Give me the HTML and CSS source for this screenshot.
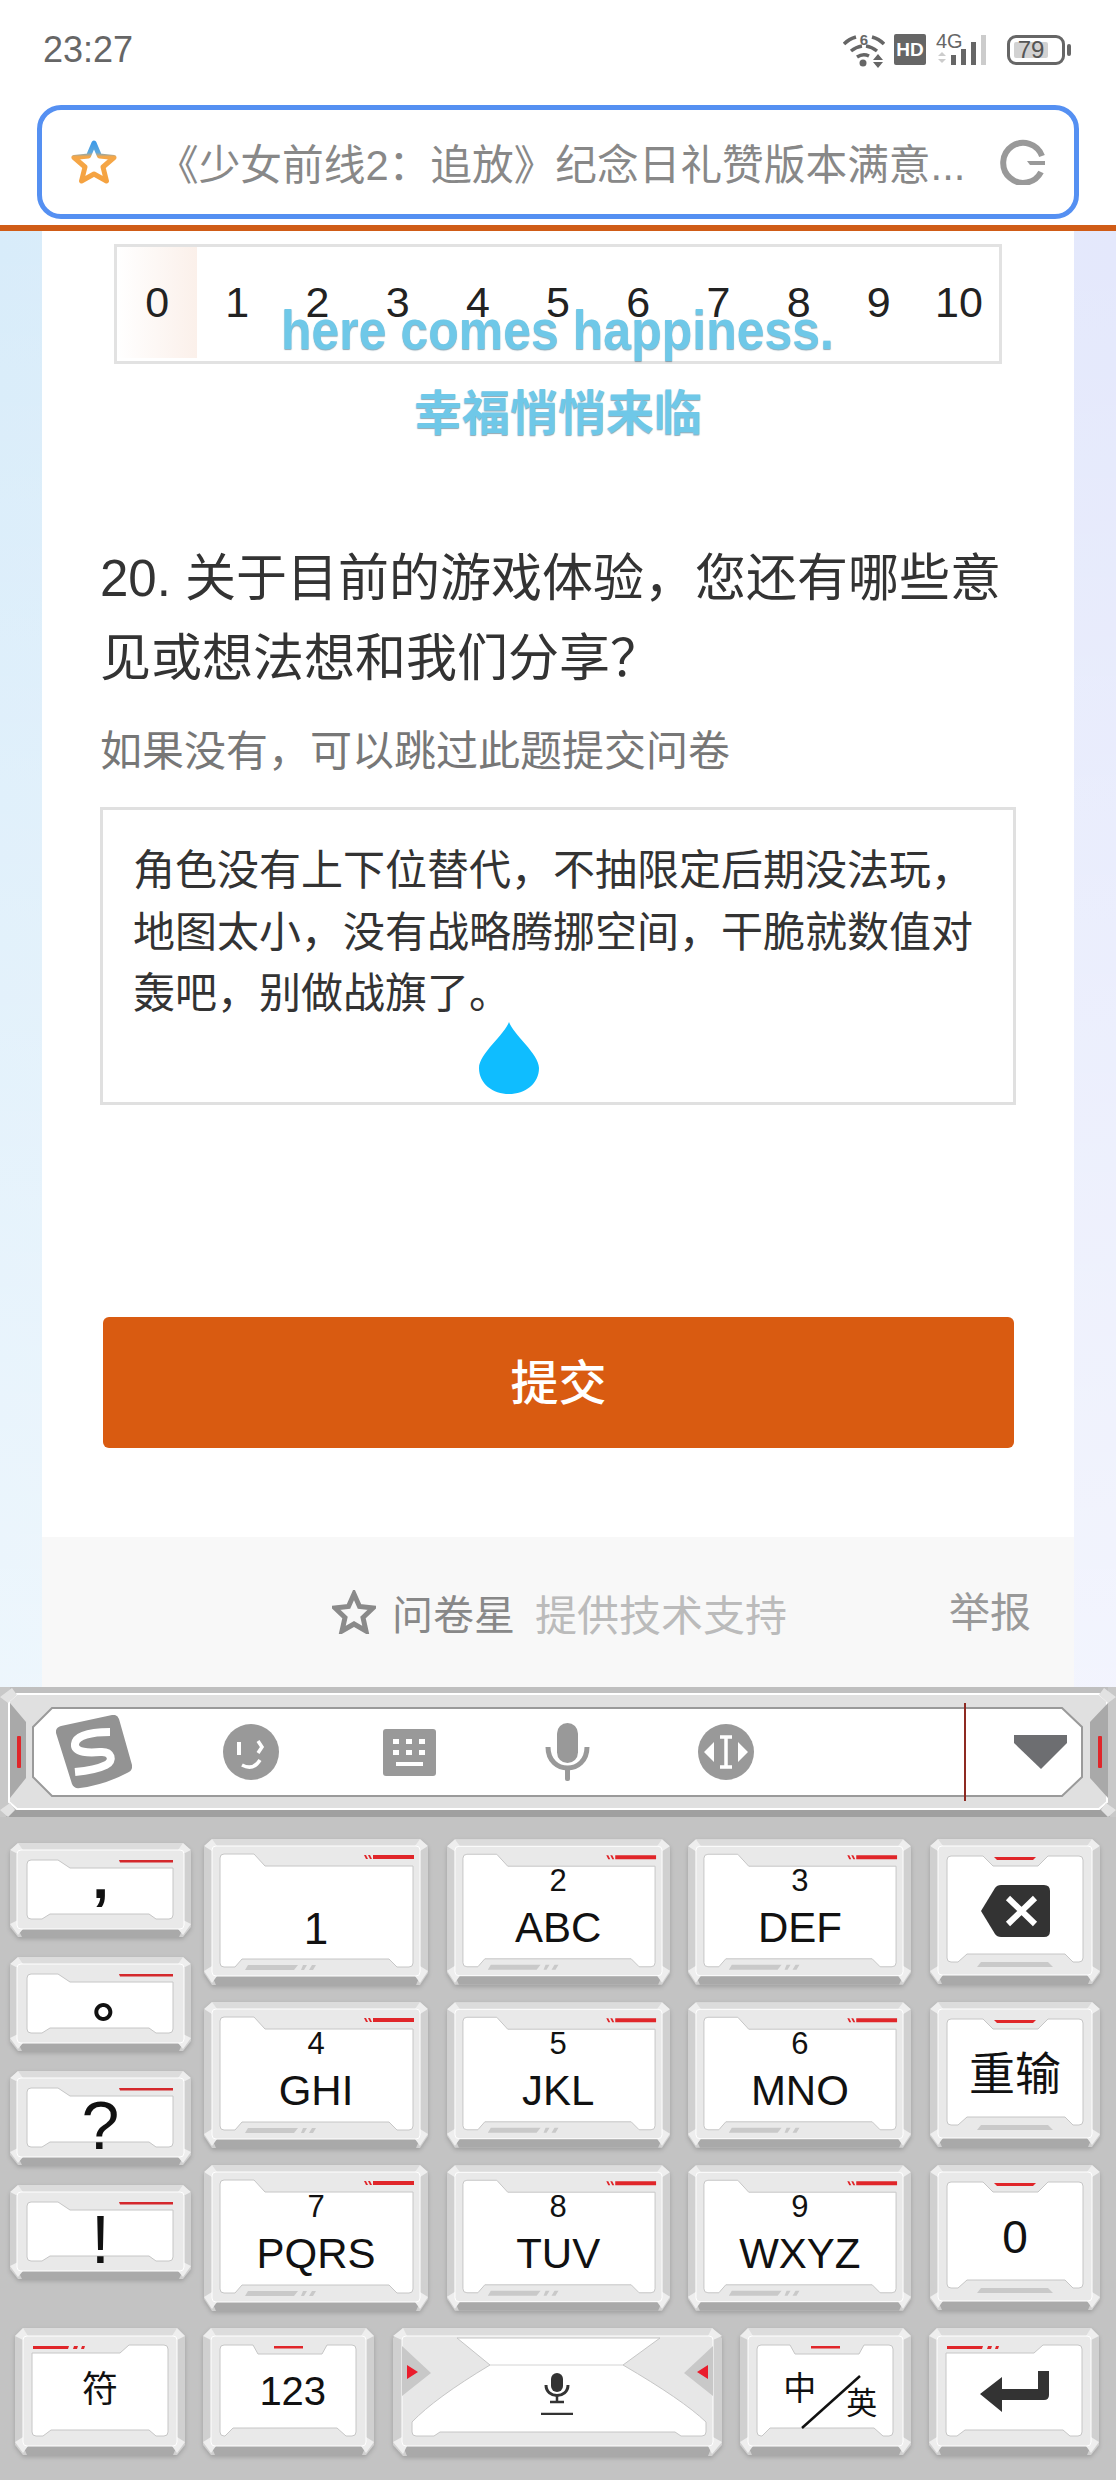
FILE: index.html
```html
<!DOCTYPE html>
<html lang="zh-CN">

<head>
    <meta charset="UTF-8">
    <meta name="viewport" content="width=device-width, initial-scale=1.0">
    <link rel="stylesheet" href="styles.css">
    <title>问卷</title>
</head>

<body>
    <!-- key frames, one for each key size -->
    <svg class="defs" width="0" height="0">
        <defs>
            <linearGradient id="star-edge" x1="0" y1="0" x2="0" y2="1">
                <stop offset="0" stop-color="#3f9be8" />
                <stop offset="0.25" stop-color="#5fa8dc" />
                <stop offset="0.36" stop-color="#f5a748" />
                <stop offset="1" stop-color="#f5a240" />
            </linearGradient>
        </defs>
        <symbol id="key-num" viewBox="0 0 224 146">
            <path d="M8 0H216L224 8V134L216 146H8L0 134V8Z" fill="#d0d0d0" />
            <path d="M8 0H216L216 8H8Z" fill="#dcdcdc" />
            <path d="M8 137H216L212 146H12Z" fill="#a9a9a9" />
            <path d="M8 0L13 7L8 12L0 7ZM216 0L224 7L216 12L211 7ZM0 132L8 127L13 137L8 144ZM224 132L216 127L211 137L216 144Z" fill="#eeeeee" />
            <rect x="8" y="7" width="208" height="130" rx="4" fill="#e9e9e9" stroke="#fff" />
            <path d="M16 19Q16 15 20 15H50L61 27H209V124Q209 128 205 128H193L185 120H38L31 128H20Q16 128 16 124Z" fill="#fff" stroke="#c6c6c6" />
            <path d="M169 16H210V20H169ZM160 16H162L164 20H162ZM164 16H166L168 20H166Z" fill="#e0262a" />
            <path d="M44 126H94L90 131H41ZM99 126H103L100 131H97ZM108 126H112L109 131H105Z" fill="#c9c9c9" />
        </symbol>
        <symbol id="key-side" viewBox="0 0 181 94">
            <path d="M8 0H173L181 8V84L173 94H8L0 84V8Z" fill="#d0d0d0" />
            <path d="M8 0H173L173 7H8Z" fill="#dcdcdc" />
            <path d="M8 86H173L169 94H12Z" fill="#a9a9a9" />
            <path d="M8 0L13 7L8 11L0 7ZM173 0L181 7L173 11L168 7ZM0 81L8 77L13 86L8 92ZM181 81L173 77L168 86L173 92Z" fill="#eeeeee" />
            <rect x="7" y="7" width="167" height="79" rx="4" fill="#e9e9e9" stroke="#fff" />
            <path d="M17 21Q17 17 21 17H48L60 25H163V72Q163 76 159 76H146L139 71H40L32 76H21Q17 76 17 72Z" fill="#fff" stroke="#c6c6c6" />
            <path d="M109 17H163V19.500H110Z" fill="#d4282c" />
        </symbol>
        <symbol id="key-action" viewBox="0 0 170 146">
            <path d="M8 0H162L170 8V134L162 145H8L0 134V8Z" fill="#d0d0d0" />
            <path d="M8 0H162L162 7H8Z" fill="#dcdcdc" />
            <path d="M8 136H162L158 145H12Z" fill="#a9a9a9" />
            <path d="M8 0L13 7L8 12L0 7ZM162 0L170 7L162 12L157 7ZM0 132L8 127L13 136L8 143ZM170 132L162 127L157 136L162 143Z" fill="#eeeeee" />
            <rect x="8" y="7" width="154" height="129" rx="4" fill="#e9e9e9" stroke="#fff" />
            <path d="M17 21Q17 17 21 17H53L63 27H108L118 17H149Q153 17 153 21V119Q153 123 149 123H143L135 115H37L28 123H21Q17 123 17 119Z" fill="#fff" stroke="#c6c6c6" />
            <path d="M64 18H106L103 21H67Z" fill="#e0262a" />
            <path d="M51 123H118L123 128H47Z" fill="#c9c9c9" />
        </symbol>
        <symbol id="key-corner" viewBox="0 0 170 127">
            <path d="M8 0H162L170 8V117L162 127H8L0 117V8Z" fill="#d0d0d0" />
            <path d="M8 0H162L162 8H8Z" fill="#dcdcdc" />
            <path d="M8 118H162L158 127H12Z" fill="#a9a9a9" />
            <path d="M8 0L13 8L8 12L0 8ZM162 0L170 8L162 12L157 8ZM0 114L8 109L13 118L8 125ZM170 114L162 109L157 118L162 125Z" fill="#eeeeee" />
            <rect x="8" y="8" width="154" height="110" rx="4" fill="#e9e9e9" stroke="#fff" />
            <path d="M17 25H105L114 17H149Q153 17 153 21V104Q153 108 149 108H141L134 102H36L28 108H21Q17 108 17 104Z" fill="#fff" stroke="#c6c6c6" />
            <path d="M18 18H54L53 21H18ZM59 18H63L62 21H58ZM67 18H70L69 21H66Z" fill="#e0262a" />
        </symbol>
        <symbol id="key-notch" viewBox="0 0 171 127">
            <path d="M8 0H163L171 8V117L163 127H8L0 117V8Z" fill="#d0d0d0" />
            <path d="M8 0H163L163 8H8Z" fill="#dcdcdc" />
            <path d="M8 118H163L159 127H12Z" fill="#a9a9a9" />
            <path d="M8 0L13 8L8 12L0 8ZM163 0L171 8L163 12L158 8ZM0 114L8 109L13 118L8 125ZM171 114L163 109L158 118L163 125Z" fill="#eeeeee" />
            <rect x="8" y="8" width="155" height="110" rx="4" fill="#e9e9e9" stroke="#fff" />
            <path d="M17 21Q17 17 21 17H50L55 26H119L124 17H149Q153 17 153 21V104Q153 108 149 108H143L134 100H30L22 108H21Q17 108 17 104Z" fill="#fff" stroke="#c6c6c6" />
            <path d="M71 18H100V20.500H71Z" fill="#e0262a" />
        </symbol>
        <symbol id="key-space" viewBox="0 0 329 128">
            <path d="M10 0H319L329 10V117L319 128H10L0 117V10Z" fill="#d0d0d0" />
            <path d="M10 0H319L319 8H10Z" fill="#dcdcdc" />
            <path d="M10 118H319L315 128H14Z" fill="#a9a9a9" />
            <path d="M10 0L14 8L9 12L0 8ZM319 0L329 8L320 12L315 8ZM0 114L9 109L14 118L10 126ZM329 114L320 109L315 118L319 126Z" fill="#eeeeee" />
            <rect x="9" y="8" width="311" height="110" rx="4" fill="#e7e7e7" stroke="#fff" />
            <path d="M64 10H267L230 37Q290 72 313 94V104Q313 108 309 108H288L282 104H47L41 108H23Q19 108 19 104V94Q42 70 97 37Z" fill="#fff" stroke="#c6c6c6" />
            <path d="M97 37H230" stroke="#d4d4d4" fill="none" />
            <path d="M9 18L38 45L9 68ZM320 18L291 45L320 68Z" fill="#c8c8c8" />
            <path d="M14 37L25 44L14 51ZM315 37L304 44L315 51Z" fill="#ea1c2c" />
        </symbol>
    </svg>

    <header class="top">
        <div class="status">
            <span class="time">23:27</span>
            <div class="status-icons">
                <svg class="i-wifi" viewBox="0 0 42 36" width="42" height="36">
                    <g fill="none" stroke="#666" stroke-width="3.500">
                        <path d="M1 12Q6 7 13 5" />
                        <path d="M29 5Q36 7 41 12" />
                        <path d="M8 19Q13 15 19 14" />
                        <path d="M23 14Q29 15 34 19" />
                        <path d="M14 25Q20 21 26 24" />
                    </g>
                    <circle cx="20" cy="31" r="3.500" fill="#666" />
                    <text x="21" y="13" class="wifi-six">6</text>
                    <path d="M35 22L40 28H30ZM30 30H40L35 36Z" fill="#666" />
                </svg>
                <span class="hd">HD</span>
                <svg class="i-signal" viewBox="0 0 60 38" width="60" height="38">
                    <text x="0" y="17" class="net">4G</text>
                    <path d="M6 21L10 25H2ZM2 28H10L6 32Z" fill="#ccc" />
                    <rect x="15" y="24" width="5" height="10" fill="#666" />
                    <rect x="25" y="18" width="5" height="16" fill="#666" />
                    <rect x="35" y="11" width="5" height="23" fill="#666" />
                    <rect x="45" y="4" width="5" height="30" fill="#ccc" />
                </svg>
                <div class="battery">
                    <span class="battery-level">79</span>
                </div>
                <span class="battery-nub"></span>
            </div>
        </div>
        <div class="address">
            <svg class="i-star" viewBox="0 0 46 46" width="46" height="46">
                <path d="M23 4L28.500 17L43 18.500L32 28L35.500 42L23 35L10.500 42L14 28L3 18.500L17.500 17Z" fill="#fff" stroke="url(#star-edge)" stroke-width="5" stroke-linejoin="round" />
            </svg>
            <span class="address-text">《少女前线2&#xFF1A;追放》纪念日礼赞版本满意...</span>
            <svg class="i-reload" viewBox="0 0 46 46" width="46" height="46">
                <path d="M41 33A20 20 0 1 1 42 17" fill="none" stroke="#999" stroke-width="6" />
                <path d="M27 22H45V26H30Z" fill="#999" />
            </svg>
        </div>
    </header>

    <main class="card">
        <div class="scale">
            <span class="scale-cell first">0</span>
            <span class="scale-cell">1</span>
            <span class="scale-cell">2</span>
            <span class="scale-cell">3</span>
            <span class="scale-cell">4</span>
            <span class="scale-cell">5</span>
            <span class="scale-cell">6</span>
            <span class="scale-cell">7</span>
            <span class="scale-cell">8</span>
            <span class="scale-cell">9</span>
            <span class="scale-cell">10</span>
        </div>
        <div class="lyric">
            <div class="lyric-en">here comes happiness.</div>
            <div class="lyric-zh">幸福悄悄来临</div>
        </div>

        <h2 class="question">20. 关于目前的游戏体验&#xFF0C;您还有哪些意见或想法想和我们分享&#xFF1F;</h2>
        <p class="hint">如果没有&#xFF0C;可以跳过此题提交问卷</p>
        <div class="answer">
            角色没有上下位替代&#xFF0C;不抽限定后期没法玩&#xFF0C;地图太小&#xFF0C;没有战略腾挪空间&#xFF0C;干脆就数值对轰吧&#xFF0C;别做战旗了。
            <svg class="drop" viewBox="0 0 60 72" width="60" height="72">
                <path d="M30 0C34 12 60 32 60 46C60 62 46 72 30 72C14 72 0 62 0 46C0 32 26 12 30 0Z" fill="#0fbdff" />
            </svg>
        </div>
        <button class="submit">提交</button>
    </main>

    <footer class="credit">
        <svg class="i-credit" viewBox="0 0 44 44" width="44" height="44">
            <path d="M22 4L27.500 16.500L41 18L31 27.500L34 41L22 34L10 41L13 27.500L3 18L16.500 16.500Z" fill="none" stroke="#8a8a8a" stroke-width="5" stroke-linejoin="miter" />
        </svg>
        <span class="brand">问卷星</span>
        <span class="support">提供技术支持</span>
        <span class="report">举报</span>
    </footer>

    <section class="keyboard">
        <div class="toolbar">
            <svg class="toolbar-frame" viewBox="0 0 1116 137" width="1116" height="137">
                <rect x="0" y="0" width="1116" height="130" fill="#bfbfbf" />
                <rect x="0" y="0" width="10" height="130" fill="#c8c8c8" />
                <rect x="1108" y="0" width="8" height="130" fill="#c8c8c8" />
                <path d="M17 7H1099L1107 14V115L1099 122H17L9 115V14Z" fill="#e0e0e0" stroke="#fff" stroke-width="2" />
                <path d="M14 123H1102L1110 130H6Z" fill="#a0a0a0" />
                <path d="M10 16L26 35V91L10 111ZM1108 16L1090 35V91L1108 111Z" fill="#a9a9a9" />
                <path d="M0 10L12 1L17 8L8 16ZM1116 10L1104 1L1099 8L1108 16ZM0 123L10 116L15 123L8 130ZM1116 123L1106 116L1101 123L1108 130Z" fill="#e2e2e2" />
                <path d="M33 40L52 21H1062L1082 40V90L1062 109H52L33 90Z" fill="#fff" stroke="#9a9a9a" stroke-width="2" />
                <rect x="17" y="49" width="4" height="32" rx="1" fill="#e0262a" />
                <rect x="1098" y="49" width="4" height="32" rx="1" fill="#e0262a" />
            </svg>
            <svg class="tool tool-logo" viewBox="0 0 76 74" width="76" height="74">
                <path d="M5 11L56 0Q61 -1 63 4L76 50Q77 56 71 58Q48 70 24 73Q18 74 16 69L0 18Q-1 13 5 11Z" fill="#939393" />
                <path d="M54 17C36 17 20 20 19 29C18 38 34 38 44 37C56 36 58 46 50 50C42 54 30 56 19 57" fill="none" stroke="#fff" stroke-width="8" />
            </svg>
            <svg class="tool tool-face" viewBox="0 0 56 56" width="56" height="56">
                <circle cx="28" cy="28" r="28" fill="#999" />
                <path d="M16 18V31" fill="none" stroke="#fff" stroke-width="4" />
                <path d="M35 17L39 23L35 29" fill="none" stroke="#fff" stroke-width="3.500" />
                <path d="M19 41Q30 47 37 36" fill="none" stroke="#fff" stroke-width="3.500" />
            </svg>
            <svg class="tool tool-keys" viewBox="0 0 53 47" width="53" height="47">
                <rect width="53" height="47" rx="3" fill="#999" />
                <path d="M10 10H16V15H10ZM23 10H29V15H23ZM36 10H42V15H36ZM10 21H16V26H10ZM23 21H29V26H23ZM36 21H42V26H36ZM13 33H40V37H13Z" fill="#fff" />
            </svg>
            <svg class="tool tool-mic" viewBox="0 0 45 58" width="45" height="58">
                <rect x="12" y="0" width="21" height="40" rx="10.500" fill="#999" />
                <path d="M3 24C3 52 42 52 42 24" fill="none" stroke="#999" stroke-width="5" />
                <rect x="20" y="44" width="5" height="14" rx="2" fill="#999" />
            </svg>
            <svg class="tool tool-cursor" viewBox="0 0 56 56" width="56" height="56">
                <circle cx="28" cy="28" r="28" fill="#999" />
                <path d="M22 13H34M28 13V43M22 43H34" fill="none" stroke="#fff" stroke-width="3.500" />
                <path d="M16 18V38L6 28ZM40 18V38L50 28Z" fill="#fff" />
            </svg>
            <span class="tool-divider"></span>
            <svg class="tool tool-fold" viewBox="0 0 53 34" width="53" height="34">
                <path d="M0 0H53V8L27 34L0 8Z" fill="#6d6e71" />
            </svg>
        </div>

        <div class="keys-main">
            <div class="keys-side">
                <div class="key key-side">
                    <svg class="key-face"><use href="#key-side" /></svg>
                    <span class="glyph comma">,</span>
                </div>
                <div class="key key-side">
                    <svg class="key-face"><use href="#key-side" /></svg>
                    <span class="glyph stop">。</span>
                </div>
                <div class="key key-side">
                    <svg class="key-face"><use href="#key-side" /></svg>
                    <span class="glyph mark">?</span>
                </div>
                <div class="key key-side">
                    <svg class="key-face"><use href="#key-side" /></svg>
                    <span class="glyph mark">!</span>
                </div>
            </div>
            <div class="keys-grid">
                <div class="key key-num key-one">
                    <svg class="key-face"><use href="#key-num" /></svg>
                    <span class="big">1</span>
                </div>
                <div class="key key-num">
                    <svg class="key-face"><use href="#key-num" /></svg>
                    <span class="digit">2</span><span class="letters">ABC</span>
                </div>
                <div class="key key-num">
                    <svg class="key-face"><use href="#key-num" /></svg>
                    <span class="digit">3</span><span class="letters">DEF</span>
                </div>
                <div class="key key-action">
                    <svg class="key-face"><use href="#key-action" /></svg>
                    <svg class="key-icon" viewBox="0 0 69 52" width="69" height="52">
                        <path d="M14 3Q16 0 20 0H63Q69 0 69 6V46Q69 52 63 52H20Q16 52 14 49L0 26Z" fill="#333" />
                        <path d="M27 13L54 39M54 13L27 39" stroke="#fff" stroke-width="6" />
                    </svg>
                </div>
                <div class="key key-num">
                    <svg class="key-face"><use href="#key-num" /></svg>
                    <span class="digit">4</span><span class="letters">GHI</span>
                </div>
                <div class="key key-num">
                    <svg class="key-face"><use href="#key-num" /></svg>
                    <span class="digit">5</span><span class="letters">JKL</span>
                </div>
                <div class="key key-num">
                    <svg class="key-face"><use href="#key-num" /></svg>
                    <span class="digit">6</span><span class="letters">MNO</span>
                </div>
                <div class="key key-action">
                    <svg class="key-face"><use href="#key-action" /></svg>
                    <span class="word">重输</span>
                </div>
                <div class="key key-num">
                    <svg class="key-face"><use href="#key-num" /></svg>
                    <span class="digit">7</span><span class="letters">PQRS</span>
                </div>
                <div class="key key-num">
                    <svg class="key-face"><use href="#key-num" /></svg>
                    <span class="digit">8</span><span class="letters">TUV</span>
                </div>
                <div class="key key-num">
                    <svg class="key-face"><use href="#key-num" /></svg>
                    <span class="digit">9</span><span class="letters">WXYZ</span>
                </div>
                <div class="key key-action">
                    <svg class="key-face"><use href="#key-action" /></svg>
                    <span class="zero">0</span>
                </div>
            </div>
        </div>

        <div class="keys-bottom">
            <div class="key key-corner">
                <svg class="key-face"><use href="#key-corner" /></svg>
                <span class="symbol">符</span>
            </div>
            <div class="key key-notch">
                <svg class="key-face"><use href="#key-notch" /></svg>
                <span class="num">123</span>
            </div>
            <div class="key key-space">
                <svg class="key-face"><use href="#key-space" /></svg>
                <svg class="key-icon" viewBox="0 0 32 42" width="32" height="42">
                    <rect x="10" y="0" width="12" height="19" rx="6" fill="#333" />
                    <path d="M5 12C5 26 27 26 27 12" fill="none" stroke="#333" stroke-width="3" />
                    <path d="M16 23V29M9 29H23M0 41H32" fill="none" stroke="#333" stroke-width="2.500" />
                </svg>
            </div>
            <div class="key key-notch">
                <svg class="key-face"><use href="#key-notch" /></svg>
                <div class="lang">
                    <span class="lang-zh">中</span>
                    <svg class="lang-slash" viewBox="0 0 60 54" width="60" height="54">
                        <path d="M59 1L1 53" stroke="#111" stroke-width="2.500" />
                    </svg>
                    <span class="lang-en">英</span>
                </div>
            </div>
            <div class="key key-corner">
                <svg class="key-face"><use href="#key-corner" /></svg>
                <svg class="key-icon" viewBox="0 0 69 41" width="69" height="41">
                    <path d="M58 0H69V24Q69 29 64 29H22V41L0 23L22 6V18H58Z" fill="#333" />
                </svg>
            </div>
        </div>
    </section>
</body>

</html>
```

FILE: styles.css
```css
* {
    box-sizing: border-box;
    margin: 0;
    padding: 0;
    font-family: "Liberation Sans", "Noto Sans CJK SC", sans-serif;
}

body {
    width: 1116px;
    height: 2480px;
    overflow: hidden;
    background:
        linear-gradient(180deg, rgba(255, 255, 255, 0) 230px, rgba(255, 255, 255, 0.55) 1700px),
        linear-gradient(90deg, #d8ecfa 0, #e4f0fb 50%, #e4e8fc 100%);
}

.defs {
    position: absolute;
}

/* top of the browser */

.top {
    height: 231px;
    background-color: #fff;
    border-bottom: 6px solid #d05c17;
}

.status {
    display: flex;
    justify-content: space-between;
    align-items: center;
    height: 105px;
    padding: 0 45px 6px 43px;
}

.time {
    font-size: 36px;
    color: #666;
}

.status-icons {
    display: flex;
    align-items: center;
}

.wifi-six {
    font-size: 15px;
    font-weight: bold;
    fill: #666;
    text-anchor: middle;
}

.hd {
    width: 32px;
    height: 31px;
    margin-left: 9px;
    border-radius: 2px;
    background-color: #666;
    color: #fff;
    font-size: 19px;
    font-weight: bold;
    line-height: 31px;
    text-align: center;
}

.i-signal {
    margin-left: 10px;
}

.net {
    font-size: 20px;
    fill: #666;
}

.battery {
    width: 58px;
    height: 30px;
    margin-left: 11px;
    padding: 4px;
    border: 3px solid #666;
    border-radius: 9px;
}

.battery-level {
    display: block;
    width: 34px;
    height: 16px;
    border-radius: 2px;
    background-color: #d2d2d2;
    color: #555;
    font-size: 24px;
    line-height: 16px;
    text-align: center;
}

.battery-nub {
    width: 4px;
    height: 12px;
    margin-left: 2px;
    border-radius: 2px;
    background-color: #666;
}

.address {
    display: flex;
    align-items: center;
    height: 114px;
    margin: 0 37px;
    padding: 0 28px 0 29px;
    border: 5px solid #5590f2;
    border-radius: 24px;
}

.address-text {
    flex: 1;
    margin-left: 40px;
    color: #888;
    font-size: 41.700px;
    white-space: nowrap;
}

/* survey */

.card {
    position: relative;
    margin: 0 42px;
    padding: 13px 58px 89px;
    background-color: #fff;
}

.scale {
    display: flex;
    height: 120px;
    margin: 0 14px;
    padding-bottom: 3px;
    border: 3px solid #e2e2e2;
}

.scale-cell {
    display: flex;
    flex: 1;
    justify-content: center;
    align-items: center;
    color: #222;
    font-size: 43px;
}

.first {
    background: linear-gradient(90deg, #fff, #fbf0ea);
}

.lyric {
    position: absolute;
    top: 70px;
    left: 0;
    width: 100%;
    color: #6fc8e8;
    font-weight: bold;
    text-align: center;
    text-shadow: 0 1px 1px rgba(70, 110, 130, 0.6);
}

.lyric-en {
    height: 85px;
    padding-right: 1px;
    font-size: 50px;
    line-height: 60px;
    transform: scaleY(1.12);
}

.lyric-zh {
    font-size: 48px;
    line-height: 56px;
}

.question {
    margin-top: 175px;
    color: #333;
    font-size: 51px;
    font-weight: normal;
    line-height: 80px;
}

.hint {
    margin-top: 23px;
    color: #777;
    font-size: 42px;
    line-height: 60px;
}

.answer {
    position: relative;
    height: 298px;
    margin-top: 25px;
    padding: 30px 30px 0;
    border: 3px solid #e0e0e0;
    color: #333;
    font-size: 42px;
    line-height: 61.500px;
}

.drop {
    position: absolute;
    top: 212px;
    left: 376px;
}

.submit {
    display: block;
    width: 911px;
    height: 131px;
    margin: 212px 3px 0;
    padding-bottom: 8px;
    border: none;
    border-radius: 6px;
    background-color: #d95b11;
    color: #fff;
    font-size: 48px;
    font-weight: 500;
}

.credit {
    display: flex;
    align-items: center;
    height: 150px;
    margin: 0 42px;
    padding: 0 43px 0 290px;
    background-color: #f8f8f8;
}

.brand {
    margin-left: 16px;
    color: #888;
    font-size: 41px;
}

.support {
    margin-left: 20px;
    color: #bbb;
    font-size: 42px;
}

.report {
    margin-left: auto;
    padding-bottom: 6px;
    color: #999;
    font-size: 41px;
}

/* keyboard */

.keyboard {
    height: 793px;
    background-color: #c3c3c3;
}

.toolbar {
    position: relative;
    display: flex;
    align-items: center;
    height: 137px;
    padding: 0 0 7px 56px;
}

.toolbar-frame {
    position: absolute;
    top: 0;
    left: 0;
}

.tool,
.tool-divider {
    position: relative;
    flex: none;
}

.tool-face {
    margin-left: 91px;
}

.tool-keys {
    margin-left: 104px;
}

.tool-mic {
    margin-left: 109px;
}

.tool-cursor {
    margin-left: 108px;
}

.tool-divider {
    width: 2px;
    height: 98px;
    margin-left: 210px;
    background-color: #8e2a22;
}

.tool-fold {
    margin-left: 48px;
}

.keys-main {
    display: flex;
    gap: 13px;
    padding: 15px 0 0 10px;
}

.keys-side {
    display: flex;
    flex-direction: column;
    gap: 20px;
    padding-top: 4px;
}

.keys-grid {
    display: grid;
    grid-template-columns: 224px 223px 223px 170px;
    grid-auto-rows: 146px;
    gap: 17px 18.700px;
}

.keys-bottom {
    display: flex;
    gap: 18.250px;
    padding: 17px 0 0 15px;
}

.key {
    position: relative;
    display: flex;
    flex-direction: column;
    align-items: center;
    justify-content: center;
    color: #111;
}

.key-face {
    position: absolute;
    top: 0;
    left: 0;
    width: 100%;
    height: 100%;
    overflow: visible;
    filter: drop-shadow(0 2px 2px rgba(0, 0, 0, 0.18));
}

.key > span,
.key > div,
.key-icon {
    position: relative;
}

.key-side {
    width: 181px;
    height: 94px;
}

.key-num {
    justify-content: flex-start;
    padding-top: 27px;
}

.key-one {
    padding-top: 68px;
}

.key-action {
    padding-bottom: 2px;
}

.key-corner {
    width: 170px;
    height: 127px;
}

.key-notch {
    width: 171px;
    height: 127px;
}

.key-space {
    width: 329px;
    height: 128px;
    padding-top: 4px;
}

.digit {
    height: 30px;
    font-size: 31px;
    line-height: 30px;
}

.letters {
    height: 42px;
    margin-top: 11px;
    font-size: 42px;
    line-height: 42px;
}

.big {
    font-size: 44px;
    line-height: 44px;
}

.zero {
    font-size: 46px;
    line-height: 46px;
}

.word {
    font-size: 46px;
    line-height: 54px;
}

.glyph {
    line-height: 1;
}

.comma {
    font-size: 60px;
    font-weight: bold;
    padding-bottom: 24px;
}

.stop {
    padding: 0 0 14px 40px;
    font-size: 56px;
    font-weight: bold;
}

.mark {
    padding-top: 14px;
    font-size: 68px;
}

.symbol {
    padding-bottom: 12px;
    font-size: 36px;
}

.num {
    padding-left: 8px;
    font-size: 40px;
}

.lang {
    width: 92px;
    height: 54px;
    margin: 20px 0 0 20px;
}

.lang-zh {
    position: absolute;
    top: -3px;
    left: -6px;
    font-size: 33px;
    line-height: 33px;
}

.lang-en {
    position: absolute;
    top: 12px;
    left: 57px;
    font-size: 31px;
    line-height: 33px;
}

.lang-slash {
    position: absolute;
    top: 0;
    left: 12px;
}
```
